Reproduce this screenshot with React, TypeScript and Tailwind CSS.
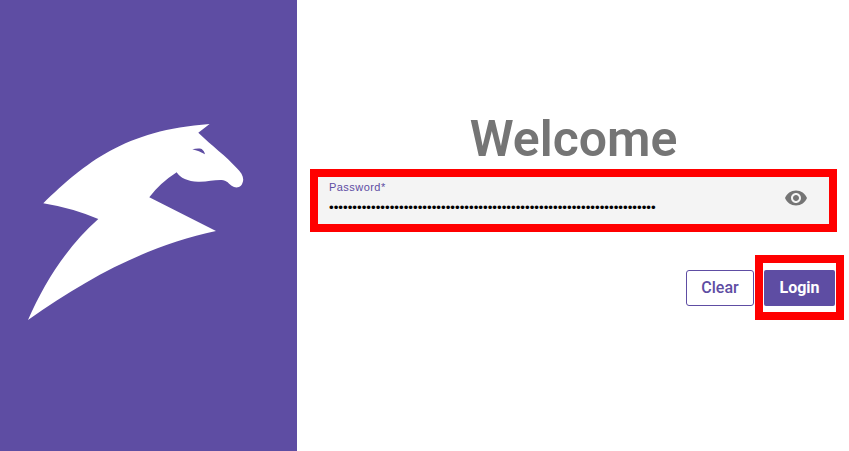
import React from 'react';

function Logo() {
  return (
    <svg viewBox="0 0 297 451" className="w-[297px] h-[451px] block">
      <path
        fill="#ffffff"
        fillRule="evenodd"
        d="M43.3 203.3C85 163 125 130 209.6 124L198.3 132.7C212 146 226 156 236.7 168C241 172 243.4 176 243.2 180C242.5 186.5 238 188.5 234 187C230 185.5 228 181 223.3 180.2C215 179.5 208 182 198 181.7C188 181.5 180 178 176.7 172.3Q160 183 149.3 197.3L216 231C150 245 90 276 28 320C45 281 68 246 98.3 219Q72 208 43.3 203.3ZM192.3 149.3C196 148.5 199 148.3 201.7 149C203.5 150.5 204.5 152 205 154.3C201 152 197 150.3 192.3 149.3Z"
      />
    </svg>
  );
}

function Eye() {
  return (
    <svg viewBox="0 0 24 24" className="w-6 h-6 fill-[#757575]">
      <path d="M12 4.5C7 4.5 2.73 7.61 1 12c1.73 4.39 6 7.5 11 7.5s9.27-3.11 11-7.5c-1.73-4.39-6-7.5-11-7.5zM12 17c-2.76 0-5-2.24-5-5s2.24-5 5-5 5 2.24 5 5-2.24 5-5 5zm0-8c-1.66 0-3 1.34-3 3s1.34 3 3 3 3-1.34 3-3-1.34-3-3-3z" />
    </svg>
  );
}

export default function App() {
  return (
    <div className="flex w-[849px] h-[451px] bg-white overflow-hidden font-['Roboto',sans-serif]">
      <div className="w-[297px] shrink-0 bg-[#5e4da3]">
        <Logo />
      </div>

      <div className="flex-1 flex flex-col pt-[109px] pl-[13px] pr-[5px]">
        <h1 className="h-[60px] w-[527px] text-center text-[50px] leading-[60px] font-semibold text-[#757575]">
          Welcome
        </h1>

        <div className="w-[527px] h-[63px] border-8 border-[#ff0000]">
          <div className="relative h-[47px] bg-[#f4f4f4] pl-[11px] pt-[4px]">
            <label className="block text-[11px] leading-[13px] tracking-[0.45px] text-[#5e4da3] font-['Liberation_Sans',sans-serif]">
              Password*
            </label>
            <input
              type="password"
              readOnly
              value={'x'.repeat(70)}
              className="mt-[6px] w-[440px] h-[16px] bg-transparent text-[13.33px] leading-[16px] text-black outline-none font-['Liberation_Sans',sans-serif]"
            />
            <div className="absolute right-[21px] top-[9px]">
              <Eye />
            </div>
          </div>
        </div>

        <div className="flex justify-end items-start mt-[23px]">
          <button className="mt-[15px] mr-[1px] w-[68px] h-[36px] rounded-[3px] border border-[#5e4da3] bg-white text-[16px] font-medium text-[#5e4da3]">
            Clear
          </button>
          <div className="w-[89px] h-[65px] border-8 border-[#ff0000] pl-[1px] pt-[7px]">
            <button className="block w-[71px] h-[36px] rounded-[2px] bg-[#5e4da3] text-[16px] font-bold text-white">
              Login
            </button>
          </div>
        </div>
      </div>
    </div>
  );
}
